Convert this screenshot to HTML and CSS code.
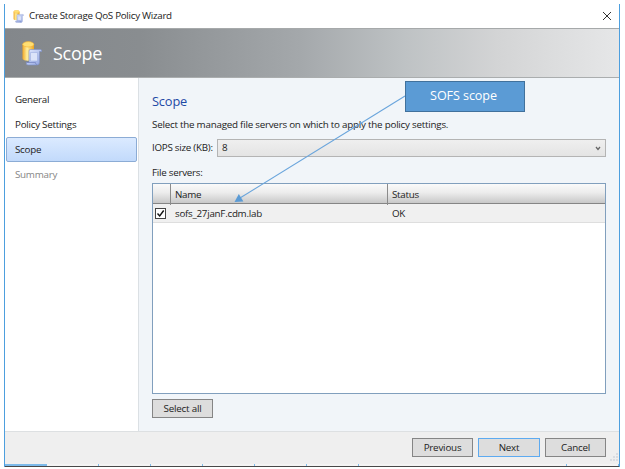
FILE: index.html
```html
<!DOCTYPE html>
<html lang="en">
<head>
<meta charset="utf-8">
<title>Create Storage QoS Policy Wizard</title>
<link rel="stylesheet" href="styles.css">
</head>
<body>
<svg class="defs" width="0" height="0" aria-hidden="true">
  <defs>
    <linearGradient id="gold"><stop offset="0" stop-color="#f3a824"/><stop offset=".4" stop-color="#fff0a0"/><stop offset="1" stop-color="#eda51f"/></linearGradient>
    <linearGradient id="paper" x2="1" y2="1"><stop offset="0" stop-color="#e4ebff"/><stop offset="1" stop-color="#8ea2de"/></linearGradient>
    <symbol id="storage" viewBox="0 0 20 25">
      <path d="M.5 3.500v14c0 3 11.500 3 11.500 0v-14z" fill="url(#gold)"/>
      <ellipse cx="6.250" cy="3.300" rx="5.600" ry="2.700" fill="#ffdf73" stroke="#f1ae30" stroke-width=".6"/>
      <path d="M7 10q0-1.500 1.500-1.500h10q1.500 0 1.200 2h-2.200v10.500q0 3-2.500 3h-9q-2 0-1.700-2.500h2.700z" fill="url(#paper)" stroke="#7e90ca" stroke-width=".6"/>
      <path d="M8.500 11.500h7v8.500h-7z" fill="#dce4f9" stroke="#9eaee0" stroke-width=".6"/>
      <path d="M4.500 21.500h9q0 2 1.500 2.500" fill="none" stroke="#7888c4" stroke-width=".8"/>
    </symbol>
  </defs>
</svg>
<main class="window">
  <header class="titlebar">
    <svg class="small-icon"><use href="#storage"/></svg>
    <span class="window-title">Create Storage QoS Policy Wizard</span>
    <svg class="close" viewBox="0 0 10 10"><path d="M1 1l8 8M9 1l-8 8"/></svg>
  </header>
  <div class="banner">
    <svg class="large-icon"><use href="#storage"/></svg>
    <h1>Scope</h1>
  </div>
  <div class="body">
    <nav>
      <div class="step">General</div>
      <div class="step">Policy Settings</div>
      <div class="step active">Scope</div>
      <div class="step disabled">Summary</div>
    </nav>
    <section class="content">
      <h2>Scope</h2>
      <p class="intro">Select the managed file servers on which to apply the policy settings.</p>
      <div class="field">
        <span class="field-label">IOPS size (KB):</span>
        <div class="select"><span>8</span><svg viewBox="0 0 6 5"><path d="M1 1l2 2.500 2-2.500"/></svg></div>
      </div>
      <p class="list-label">File servers:</p>
      <div class="table">
        <div class="row head"><span></span><span>Name</span><span>Status</span></div>
        <div class="row item">
          <span><svg class="check" viewBox="0 0 11 11"><rect x=".5" y=".5" width="10" height="10"/><path d="M2.500 5.500l2.200 2.500 4-5.500"/></svg></span>
          <span>sofs_27janF.cdm.lab</span><span>OK</span>
        </div>
      </div>
      <button class="select-all">Select all</button>
    </section>
  </div>
  <footer>
    <button>Previous</button>
    <button class="primary">Next</button>
    <button>Cancel</button>
    <svg class="grip" viewBox="0 0 10 10"><path d="M7 1h2M4 4h2M7 4h2M1 7h2M4 7h2M7 7h2"/></svg>
  </footer>
  <div class="edge"><i class="wide"></i><i></i><i></i><i></i><i></i><i></i><i></i><i class="far"></i><i></i></div>
</main>
<svg class="arrow" viewBox="0 0 625 469"><path class="line" d="M405 96L240 198"/><path class="tip" d="M234.500 202l4.300-8 4.600 7.400z"/></svg>
<div class="callout">SOFS scope</div>
</body>
</html>
```
FILE: styles.css
```css
* { box-sizing: border-box; }
body {
  margin: 0;
  width: 625px;
  height: 469px;
  padding: 4px 0 0 4px;
  overflow: hidden;
  background: #fff;
  color: #222;
  font: 9.8px/14px "Open Sans", "Noto Sans", sans-serif;
  letter-spacing: -0.26px;
}
.defs { position: absolute; }
h1, h2, p { margin: 0; font-weight: 400; }
.window {
  width: 616px;
  height: 463px;
  display: flex;
  flex-direction: column;
  border: solid #4d9fde;
  border-width: 0 1px;
}
.titlebar { height: 24px; display: flex; align-items: center; padding: 0 8px; }
.small-icon { width: 11px; height: 13px; margin-right: 5px; }
.window-title { flex: 1; letter-spacing: -0.29px; }
.close { width: 10px; height: 10px; margin-right: -1px; fill: none; stroke: #333; stroke-width: 1; }
.banner {
  height: 50px;
  display: flex;
  align-items: center;
  padding-left: 17px;
  border-top: 1px solid #a6a9aa;
  border-bottom: 1px solid #aaadae;
  background: linear-gradient(90deg, #83878b 0, #898d90 22%, #a4a8ab 48%, #bec2c4 65%, #d3d4d5 80%, #e6e7e8 100%);
}
.large-icon { width: 20px; height: 25px; margin-right: 11px; }
h1 { color: #fff; font-size: 18px; line-height: 24px; letter-spacing: -0.25px; }
.body { height: 353px; display: flex; }
nav { width: 134px; padding: 9px 1px; border-right: 1px solid #dbe0e4; }
.step { height: 25px; padding: 0 9px; line-height: 25px; }
.step.active {
  padding: 0 8px;
  border: 1px solid #8cacd5;
  border-radius: 2px;
  background: linear-gradient(#dbeaff, #c2dafb);
  line-height: 23px;
}
.step.disabled { color: #858585; }
.content { flex: 1; padding: 14px 13px 0; background: #f1f5f9; }
h2 { color: #1f49a5; font-size: 12.8px; line-height: 18px; letter-spacing: -0.15px; }
.intro { margin-top: 8px; height: 14px; letter-spacing: -0.23px; }
.field { height: 18px; margin-top: 7px; display: flex; align-items: center; }
.field-label { width: 65px; white-space: nowrap; }
.select {
  flex: 1;
  height: 18px;
  display: flex;
  align-items: center;
  justify-content: space-between;
  padding: 0 4px;
  border: 1px solid #b4b4b4;
  background: linear-gradient(#efefef, #e4e4e4);
}
.select svg { width: 6px; height: 5px; fill: none; stroke: #666; stroke-width: 1.3; }
.list-label { margin-top: 9px; height: 17px; }
.table { height: 211px; border: 1px solid #819fbd; background: #fff; }
.row { display: grid; grid-template-columns: 17px 217px 1fr; }
.head { height: 20px; border-bottom: 1px solid #858585; background: linear-gradient(#fafafa, #ececec 45%, #c8c8c8); }
.head span { padding-left: 4px; line-height: 21px; border-left: 1px solid #8b8b8b; }
.head span:first-child { border: 0; }
.item { height: 19px; background: #f0f0f0; border-bottom: 1px solid #dedede; line-height: 20px; }
.item span { padding-left: 5px; }
.item span:first-child { padding: 4px 0 0 2px; line-height: 0; }
.check { width: 11px; height: 11px; fill: #fff; stroke: #444; stroke-width: 1; }
.check path { fill: none; stroke: #111; stroke-width: 1.4; }
button {
  width: 61px;
  height: 19px;
  padding: 0;
  border: 1px solid #858585;
  background: #ddd;
  color: #222;
  font: inherit;
  letter-spacing: -0.2px;
  line-height: 17px;
}
.select-all { display: block; margin-top: 5px; }
footer {
  position: relative;
  height: 33px;
  display: flex;
  justify-content: flex-end;
  gap: 5px;
  padding: 6px 13px 0 0;
  border-top: 1px solid #dde0e2;
  background: #efefef;
}
footer .primary { width: 62px; border-color: #5daaf0; }
.grip { position: absolute; right: 0; bottom: 1px; width: 10px; height: 10px; stroke: #c3c9d4; stroke-width: 1.2; }
.edge {
  height: 3px;
  display: flex;
  gap: 51px;
  background: #f4f4f4;
  border-bottom: 1px solid #484848;
}
.edge i { width: 1px; height: 2px; flex: none; background: #7dbaea; }
.edge .wide { width: 42px; }
.edge .far { margin-left: 156px; }
.arrow { position: absolute; left: 0; top: 0; width: 625px; height: 469px; }
.line { stroke: #6aa5dc; stroke-width: 1.1; }
.tip { fill: #5b9bd5; }
.callout {
  position: absolute;
  left: 404.5px;
  top: 81px;
  width: 120px;
  height: 31px;
  border: 1px solid #41719c;
  background: #5b9bd5;
  color: #fff;
  font: 12.6px/28px "Open Sans", sans-serif;
  letter-spacing: -0.1px;
  padding-right: 2px;
  text-align: center;
}
```
